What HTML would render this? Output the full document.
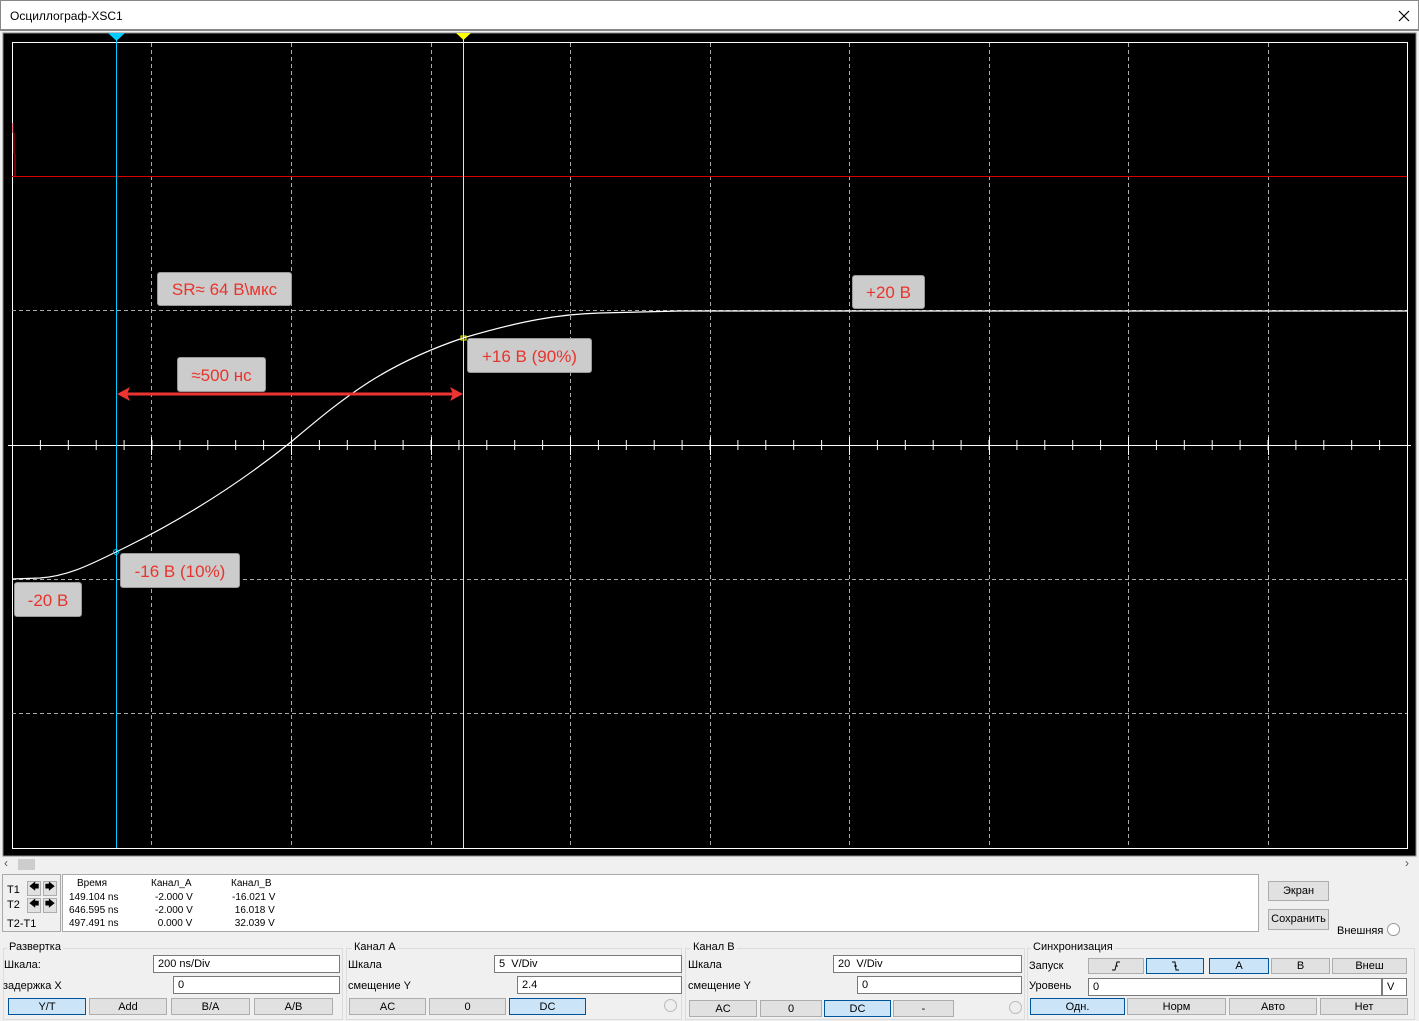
<!DOCTYPE html>
<html><head><meta charset="utf-8"><style>
*{box-sizing:border-box;margin:0;padding:0}
body{width:1419px;height:1021px;background:#f0f0f0;font-family:"Liberation Sans",sans-serif;font-size:11px;color:#000;position:relative;overflow:hidden}
.a{position:absolute}
.tb{left:0;top:0;width:1419px;height:31px;background:#fff;border:1px solid #888;border-bottom:2px solid #888}
.btn{position:absolute;height:17px;background:#e1e1e1;border:1px solid #adadad;text-align:center;line-height:16px;font-size:11px}
.sel{background:#cce4f7;border-color:#005499}
.inp{position:absolute;height:18px;background:#fff;border:1px solid #7a7a7a;padding-left:4px;line-height:17px;font-size:11px}
.lbl{position:absolute;font-size:11px;margin-top:1px}
.grp{position:absolute;border:1px solid #dcdcdc}
.gt{position:absolute;background:#f0f0f0;padding:0 2px;font-size:11px}
.tag{position:absolute;background:#ccc;border:1px solid #999;border-radius:3px;color:#e8342c;font-size:17px;text-align:center}
</style></head><body>
<div class="a tb"><span class="a" style="left:9px;top:8px;font-size:12px">Осциллограф-XSC1</span>
<svg class="a" style="left:1397px;top:9px" width="12" height="12"><path d="M1 1L11 11M11 1L1 11" stroke="#000" stroke-width="1.2"/></svg></div>
<svg class="a" style="left:0;top:31px" width="1419" height="826">
<defs>
<pattern id="tx" x="12" y="0" width="27.9" height="826" patternUnits="userSpaceOnUse"><line x1="0.5" y1="409" x2="0.5" y2="419" stroke="#fff"/></pattern>
</defs>
<rect x="0" y="0" width="1419" height="826" fill="#f0f0f0"/>
<rect x="3" y="2" width="1413" height="823" fill="#000" stroke="#888"/>
<rect x="12.5" y="11.5" width="1395" height="806" fill="none" stroke="#fff"/>
<g stroke="#aaa" stroke-dasharray="4,3">
<line x1="151.5" y1="12" x2="151.5" y2="817"/><line x1="291.5" y1="12" x2="291.5" y2="817"/><line x1="431.5" y1="12" x2="431.5" y2="817"/><line x1="570.5" y1="12" x2="570.5" y2="817"/><line x1="710.5" y1="12" x2="710.5" y2="817"/><line x1="849.5" y1="12" x2="849.5" y2="817"/><line x1="989.5" y1="12" x2="989.5" y2="817"/><line x1="1128.5" y1="12" x2="1128.5" y2="817"/><line x1="1268.5" y1="12" x2="1268.5" y2="817"/>
<line x1="12" y1="145.5" x2="1407" y2="145.5"/><line x1="12" y1="279.5" x2="1407" y2="279.5"/><line x1="12" y1="548.5" x2="1407" y2="548.5"/><line x1="12" y1="682.5" x2="1407" y2="682.5"/>
</g>
<line x1="8" y1="414.5" x2="1411" y2="414.5" stroke="#fff"/>
<rect x="12" y="408" width="1396" height="12" fill="url(#tx)"/>
<g stroke="#fff"><line x1="151.5" y1="406" x2="151.5" y2="424"/><line x1="291.5" y1="406" x2="291.5" y2="424"/><line x1="431.5" y1="406" x2="431.5" y2="424"/><line x1="570.5" y1="406" x2="570.5" y2="424"/><line x1="710.5" y1="406" x2="710.5" y2="424"/><line x1="849.5" y1="406" x2="849.5" y2="424"/><line x1="989.5" y1="406" x2="989.5" y2="424"/><line x1="1128.5" y1="406" x2="1128.5" y2="424"/><line x1="1268.5" y1="406" x2="1268.5" y2="424"/></g>
<line x1="12" y1="145.5" x2="1407" y2="145.5" stroke="#d00"/>
<path d="M13 92V102M14 102V123M15 123V145" stroke="#d00" fill="none"/>
<line x1="116.5" y1="6" x2="116.5" y2="817" stroke="#0cf"/>
<line x1="463.5" y1="6" x2="463.5" y2="817" stroke="#ff0"/>
<polygon points="108,2 125,2 116.5,10" fill="#0cf"/>
<polygon points="456,2 471,2 463.5,9" fill="#ff0"/>
<path d="M12 548 L40 547 C70 545 95 531 116 521 C170 495 230 460 291 411 C340 370 380 335 463 307 C520 290 560 283 600 282 L680 280 L1407 280" stroke="#fff" stroke-width="1.2" fill="none"/>
<circle cx="116" cy="521" r="2.5" fill="none" stroke="#0cf"/>
<rect x="461" y="305" width="5" height="4" fill="none" stroke="#ff0"/>
<line x1="125" y1="363" x2="455" y2="363" stroke="#e33" stroke-width="3"/>
<polygon points="117,363 130,356 127,363 130,370" fill="#e33"/>
<polygon points="463,363 450,356 453,363 450,370" fill="#e33"/>
</svg>
<div class="tag" style="left:157px;top:272px;width:135px;height:34px;line-height:34px">SR≈ 64 В\мкс</div>
<div class="tag" style="left:177px;top:357px;width:89px;height:35px;line-height:35px">≈500 нс</div>
<div class="tag" style="left:852px;top:275px;width:73px;height:34px;line-height:34px">+20 В</div>
<div class="tag" style="left:467px;top:338px;width:125px;height:35px;line-height:35px">+16 В (90%)</div>
<div class="tag" style="left:120px;top:553px;width:120px;height:35px;line-height:35px">-16 В (10%)</div>
<div class="tag" style="left:14px;top:582px;width:68px;height:35px;line-height:35px">-20 В</div>
<div class="a" style="left:0;top:857px;width:1419px;height:15px;background:#f0f0f0"></div>
<div class="a" style="left:4px;top:856px;font-size:12px;color:#555">‹</div>
<div class="a" style="left:18px;top:859px;width:17px;height:11px;background:#cdcdcd"></div>
<div class="a" style="left:1405px;top:856px;font-size:12px;color:#555">›</div>
<div class="a" style="left:2px;top:874px;width:59px;height:58px;border:1px solid #aaa"></div>
<div class="lbl" style="left:7px;top:883px">T1</div><div class="lbl" style="left:7px;top:898px">T2</div><div class="lbl" style="left:7px;top:917px">T2-T1</div>
<div class="btn" style="left:27px;top:881px;width:14px;height:15px;line-height:12px;font-size:10px">🡄</div><div class="btn" style="left:43px;top:881px;width:14px;height:15px;line-height:12px;font-size:10px">🡆</div>
<div class="btn" style="left:27px;top:898px;width:14px;height:15px;line-height:12px;font-size:10px">🡄</div><div class="btn" style="left:43px;top:898px;width:14px;height:15px;line-height:12px;font-size:10px">🡆</div>
<div class="a" style="left:62px;top:874px;width:1197px;height:58px;background:#fff;border:1px solid #aaa"></div>
<div class="lbl" style="left:77px;top:877px;font-size:10px">Время</div><div class="lbl" style="left:151px;top:877px;font-size:10px">Канал_A</div><div class="lbl" style="left:231px;top:877px;font-size:10px">Канал_B</div>
<div class="lbl" style="left:69px;top:890px;font-size:10px;line-height:13px">149.104 ns<br>646.595 ns<br>497.491 ns</div>
<div class="lbl" style="left:155px;top:890px;font-size:10px;line-height:13px">-2.000 V<br>-2.000 V<br>&nbsp;0.000 V</div>
<div class="lbl" style="left:232px;top:890px;font-size:10px;line-height:13px">-16.021 V<br>&nbsp;16.018 V<br>&nbsp;32.039 V</div>
<div class="btn" style="left:1268px;top:881px;width:61px;height:20px;line-height:18px">Экран</div>
<div class="btn" style="left:1268px;top:909px;width:61px;height:21px;line-height:19px">Сохранить</div>
<div class="lbl" style="left:1337px;top:924px">Внешняя</div>
<div class="a" style="left:1387px;top:923px;width:13px;height:13px;border-radius:50%;border:1px solid #999;background:#fff"></div>
<div class="grp" style="left:3px;top:948px;width:340px;height:72px"></div><div class="gt" style="left:7px;top:941px">Развертка</div>
<div class="grp" style="left:346px;top:948px;width:336px;height:72px"></div><div class="gt" style="left:352px;top:941px">Канал A</div>
<div class="grp" style="left:685px;top:948px;width:340px;height:72px"></div><div class="gt" style="left:691px;top:941px">Канал B</div>
<div class="grp" style="left:1027px;top:948px;width:388px;height:72px"></div><div class="gt" style="left:1031px;top:941px">Синхронизация</div>
<div class="lbl" style="left:4px;top:958px">Шкала:</div><div class="inp" style="left:153px;top:955px;width:187px">200 ns/Div</div>
<div class="lbl" style="left:3px;top:979px">задержка X</div><div class="inp" style="left:173px;top:976px;width:167px">0</div>
<div class="btn sel" style="left:8px;top:998px;width:78px">Y/T</div><div class="btn" style="left:89px;top:998px;width:78px">Add</div><div class="btn" style="left:171px;top:998px;width:79px">B/A</div><div class="btn" style="left:254px;top:998px;width:79px">A/B</div>
<div class="lbl" style="left:348px;top:958px">Шкала</div><div class="inp" style="left:494px;top:955px;width:188px">5&nbsp; V/Div</div>
<div class="lbl" style="left:348px;top:979px">смещение Y</div><div class="inp" style="left:517px;top:976px;width:165px">2.4</div>
<div class="btn" style="left:349px;top:998px;width:77px">AC</div><div class="btn" style="left:429px;top:998px;width:77px">0</div><div class="btn sel" style="left:509px;top:998px;width:77px">DC</div>
<div class="a" style="left:664px;top:999px;width:13px;height:13px;border-radius:50%;border:1px solid #bbb;background:#eee"></div>
<div class="lbl" style="left:688px;top:958px">Шкала</div><div class="inp" style="left:833px;top:955px;width:189px">20&nbsp; V/Div</div>
<div class="lbl" style="left:688px;top:979px">смещение Y</div><div class="inp" style="left:857px;top:976px;width:165px">0</div>
<div class="btn" style="left:689px;top:1000px;width:68px">AC</div><div class="btn" style="left:760px;top:1000px;width:62px">0</div><div class="btn sel" style="left:824px;top:1000px;width:67px">DC</div><div class="btn" style="left:893px;top:1000px;width:61px">-</div>
<div class="a" style="left:1009px;top:1001px;width:13px;height:13px;border-radius:50%;border:1px solid #bbb;background:#eee"></div>
<div class="lbl" style="left:1029px;top:959px">Запуск</div>
<div class="btn" style="left:1088px;top:958px;width:56px;height:16px"><svg width="10" height="12" style="margin-top:1px"><path d="M1 10H4L6 2H9M5 6H7" stroke="#000" fill="none"/></svg></div>
<div class="btn sel" style="left:1146px;top:958px;width:58px;height:16px"><svg width="10" height="12" style="margin-top:1px"><path d="M2 2H5L6 10H9M4 6H7" stroke="#000" fill="none"/></svg></div>
<div class="btn sel" style="left:1209px;top:958px;width:60px;height:16px;line-height:15px">A</div><div class="btn" style="left:1271px;top:958px;width:59px;height:16px;line-height:15px">B</div><div class="btn" style="left:1332px;top:958px;width:75px;height:16px;line-height:15px">Внеш</div>
<div class="lbl" style="left:1029px;top:979px">Уровень</div><div class="inp" style="left:1088px;top:978px;width:294px">0</div><div class="inp" style="left:1382px;top:978px;width:25px">V</div>
<div class="btn sel" style="left:1030px;top:998px;width:95px">Одн.</div><div class="btn" style="left:1127px;top:998px;width:99px">Норм</div><div class="btn" style="left:1229px;top:998px;width:88px">Авто</div><div class="btn" style="left:1320px;top:998px;width:88px">Нет</div>
</body></html>
